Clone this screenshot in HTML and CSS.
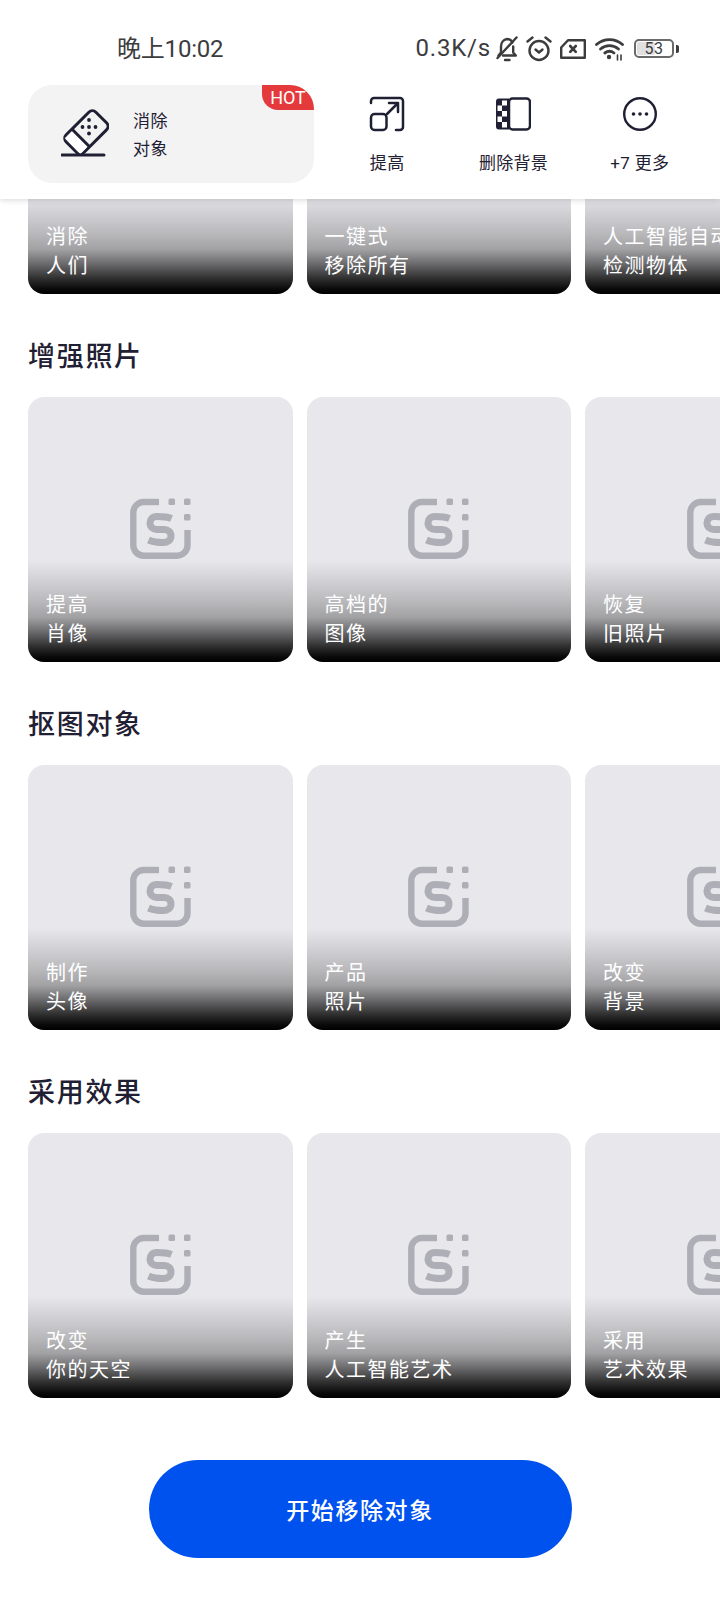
FILE: index.html
```html
<!DOCTYPE html>
<html lang="zh-CN">
<head>
    <meta charset="UTF-8">
    <meta name="viewport" content="width=device-width, initial-scale=1.0">
    <title>消除对象</title>
    <link rel="stylesheet" href="styles.css">
</head>
<body>
    <div class="screen">
        <header class="top">
            <div class="status">
                <span class="status-time">晚上10:02</span>
                <div class="status-right">
                    <span class="status-speed">0.3K/s</span>
                    <svg class="st-bell" width="24" height="26" viewBox="0 0 24 26" fill="none" stroke="#3c3c3e" stroke-width="2.4" stroke-linejoin="round" stroke-linecap="round">
                        <path d="M3.500 19.500 6 16.500V10.500C6 6.500 8.500 3.500 12 3 14.500 3 16.400 4.400 17.400 6.400"/>
                        <path d="M18.200 10.500V16.500L20.800 19.500H8"/>
                        <path d="M2.500 22 21.500 1.500"/>
                        <path d="M10 24H14.500"/>
                    </svg>
                    <svg class="st-alarm" width="26" height="26" viewBox="0 0 26 26" fill="none" stroke="#3c3c3e" stroke-width="2.4" stroke-linecap="round" stroke-linejoin="round">
                        <circle cx="13" cy="14.500" r="9.500"/>
                        <path d="M1.500 5.500 6.500 1.500M24.500 5.500 19.500 1.500"/>
                        <path d="M9.500 13.500 13 16.500 16.500 13.500"/>
                    </svg>
                    <svg class="st-sim" width="26" height="20" viewBox="0 0 26 20" fill="none" stroke="#3c3c3e" stroke-width="2.400" stroke-linejoin="round" stroke-linecap="round">
                        <path d="M1.200 8.500 8 1.200H24.800V18.800H1.200Z"/>
                        <path d="M10.200 7 15.800 12.800M15.800 7 10.200 12.800" stroke-width="2.600"/>
                    </svg>
                    <svg class="st-wifi" width="30" height="24" viewBox="0 0 30 24" fill="none" stroke="#3c3c3e" stroke-width="2.800" stroke-linecap="round">
                        <path d="M1.500 7.500C9 1 20 1 27.500 7.500"/>
                        <path d="M5.500 12C11 7.500 18 7.500 23.500 12"/>
                        <path d="M9.800 16C12.800 13.800 16.200 13.800 19 16"/>
                        <circle cx="14" cy="20" r="2.200" fill="#3c3c3e" stroke="none"/>
                        <path d="M22.500 18V23M26 18V23" stroke-width="1.600"/>
                    </svg>
                    <div class="battery">
                        <div class="battery-body">
                            <span class="battery-fill"></span>
                            <span class="battery-num">53</span>
                        </div>
                        <span class="battery-nub"></span>
                    </div>
                </div>
            </div>
            <div class="tools">
                <div class="tool-main">
                    <svg width="48" height="52" viewBox="0 0 48 52" fill="none" stroke="#1f2033" stroke-width="3">
                        <g transform="rotate(-45 25 24)">
                            <rect x="4" y="12" width="42" height="25" rx="5"/>
                            <path d="M17 12V37"/>
                            <rect x="5.500" y="13.500" width="10" height="22" fill="#fff" stroke="none"/>
                        </g>
                        <path d="M1 47H43" stroke-linecap="round"/>
                        <g fill="#1f2033" stroke="none">
                            <circle cx="28" cy="12" r="1.900"/>
                            <circle cx="21.500" cy="19" r="1.900"/>
                            <circle cx="28" cy="19" r="1.900"/>
                            <circle cx="34.500" cy="19" r="1.900"/>
                            <circle cx="28" cy="25.500" r="1.900"/>
                        </g>
                    </svg>
                    <div class="tool-main-text">消除<br>对象</div>
                    <span class="hot">HOT</span>
                </div>
                <div class="tool">
                    <svg width="36" height="36" viewBox="0 0 36 36" fill="none" stroke="#1f2033" stroke-width="2.500" stroke-linecap="round" stroke-linejoin="round">
                        <path d="M2 7V5A3 3 0 0 1 5 2H31A3 3 0 0 1 34 5V31A3 3 0 0 1 31 34H27"/>
                        <rect x="2" y="18" width="15.500" height="16" rx="3.500"/>
                        <path d="M18 18 28.500 7.500M20 7H29V16"/>
                    </svg>
                    <span class="tool-label">提高</span>
                </div>
                <div class="tool">
                    <svg width="36" height="36" viewBox="0 0 36 36" fill="none">
                        <path d="M4 2.500H14V33.500H4A3 3 0 0 1 1 30.500V5.500A3 3 0 0 1 4 2.500Z" fill="#1f2033"/>
                        <g fill="#fff">
                            <rect x="7" y="4.500" width="5" height="5"/>
                            <rect x="2.500" y="9.500" width="4.500" height="5.500"/>
                            <rect x="7" y="15" width="5" height="5.500"/>
                            <rect x="2.500" y="20.500" width="4.500" height="5.500"/>
                            <rect x="7" y="26" width="5" height="5.500"/>
                        </g>
                        <rect x="14" y="2.500" width="21" height="31" rx="3.500" stroke="#1f2033" stroke-width="2.500"/>
                    </svg>
                    <span class="tool-label">删除背景</span>
                </div>
                <div class="tool">
                    <svg width="36" height="36" viewBox="0 0 36 36" fill="none">
                        <circle cx="18" cy="18" r="15.800" stroke="#1f2033" stroke-width="2.400"/>
                        <g fill="#1f2033">
                            <circle cx="11.500" cy="18" r="1.800"/>
                            <circle cx="18" cy="18" r="1.800"/>
                            <circle cx="24.500" cy="18" r="1.800"/>
                        </g>
                    </svg>
                    <span class="tool-label">+7 更多</span>
                </div>
            </div>
        </header>

        <main class="feed">
            <!-- first row is scrolled up under the header -->
            <div class="row row-scrolled">
                <div class="tile"><div class="tile-text">消除<br>人们</div></div>
                <div class="tile"><div class="tile-text">一键式<br>移除所有</div></div>
                <div class="tile"><div class="tile-text">人工智能自动<br>检测物体</div></div>
            </div>

            <h2 class="section-title">增强照片</h2>
            <div class="row">
                <div class="tile">
                    <svg class="logo" viewBox="0 0 61 61"><use href="#logo-s"/></svg>
                    <div class="tile-text">提高<br>肖像</div>
                </div>
                <div class="tile">
                    <svg class="logo" viewBox="0 0 61 61"><use href="#logo-s"/></svg>
                    <div class="tile-text">高档的<br>图像</div>
                </div>
                <div class="tile">
                    <svg class="logo" viewBox="0 0 61 61"><use href="#logo-s"/></svg>
                    <div class="tile-text">恢复<br>旧照片</div>
                </div>
            </div>

            <h2 class="section-title">抠图对象</h2>
            <div class="row">
                <div class="tile">
                    <svg class="logo" viewBox="0 0 61 61"><use href="#logo-s"/></svg>
                    <div class="tile-text">制作<br>头像</div>
                </div>
                <div class="tile">
                    <svg class="logo" viewBox="0 0 61 61"><use href="#logo-s"/></svg>
                    <div class="tile-text">产品<br>照片</div>
                </div>
                <div class="tile">
                    <svg class="logo" viewBox="0 0 61 61"><use href="#logo-s"/></svg>
                    <div class="tile-text">改变<br>背景</div>
                </div>
            </div>

            <h2 class="section-title">采用效果</h2>
            <div class="row">
                <div class="tile">
                    <svg class="logo" viewBox="0 0 61 61"><use href="#logo-s"/></svg>
                    <div class="tile-text">改变<br>你的天空</div>
                </div>
                <div class="tile">
                    <svg class="logo" viewBox="0 0 61 61"><use href="#logo-s"/></svg>
                    <div class="tile-text">产生<br>人工智能艺术</div>
                </div>
                <div class="tile">
                    <svg class="logo" viewBox="0 0 61 61"><use href="#logo-s"/></svg>
                    <div class="tile-text">采用<br>艺术效果</div>
                </div>
            </div>

            <div class="action">
                <button class="start-btn">开始移除对象</button>
            </div>
        </main>
    </div>

    <svg class="defs" width="0" height="0">
        <symbol id="logo-s" viewBox="0 0 61 61">
            <g fill="none" stroke="#aeaeb6" stroke-width="6.400">
                <path d="M29 4H14A10.500 10.500 0 0 0 3.300 14.500V47A10.500 10.500 0 0 0 14 57.700H47A10.500 10.500 0 0 0 57.500 47V32"/>
                <path d="M41.500 20.500C38 19 33 18.500 27 18.500 22 18.500 20 22 20 25 20 29 23 31.500 27 31.500H34C38.500 31.500 41 34 41 38 41 42 38 44.500 33 44.500 28 44.500 23 44 18.500 42" stroke-width="7"/>
            </g>
            <g fill="#aeaeb6">
                <rect x="38.500" y="0.500" width="6.500" height="6.500" rx="1.500"/>
                <rect x="54" y="0.500" width="6.500" height="6.500" rx="1.500"/>
                <rect x="54" y="16" width="6.500" height="6.500" rx="1.500"/>
            </g>
        </symbol>
    </svg>
</body>
</html>
```

FILE: styles.css
```css
* {
    box-sizing: border-box;
}

body {
    margin: 0;
    background: #fff;
    font-family: Roboto, "Noto Sans CJK SC", sans-serif;
}

.screen {
    width: 720px;
    height: 1600px;
    display: flex;
    flex-direction: column;
    overflow: hidden;
}

.top {
    height: 199px;
    flex-shrink: 0;
    position: relative;
    z-index: 2;
    background: #fff;
    box-shadow: 0 1px 6px rgba(0, 0, 0, 0.16);
}

.status {
    height: 85px;
    padding: 12px 41px 0 117px;
    display: flex;
    justify-content: space-between;
    align-items: center;
    color: #3c3c3e;
    font-size: 24px;
}

.status-time {
    margin-bottom: 4px;
    letter-spacing: -0.2px;
}

.status-right {
    display: flex;
    align-items: center;
}

.status-speed {
    letter-spacing: 0.8px;
    margin-right: 4px;
    margin-bottom: 2px;
}

.st-alarm {
    margin-left: 7px;
}

.st-sim {
    margin-left: 8px;
}

.st-wifi {
    margin-left: 9px;
}

.battery {
    margin-left: 9px;
    display: flex;
    align-items: center;
}

.battery-body {
    width: 40px;
    height: 19px;
    border: 2px solid #6a6a6c;
    border-radius: 5px;
    position: relative;
    display: flex;
    align-items: center;
    justify-content: center;
}

.battery-fill {
    position: absolute;
    left: 1px;
    top: 1px;
    bottom: 1px;
    width: 18px;
    background: #e0e0e2;
    border-radius: 2px;
}

.battery-num {
    position: relative;
    font-size: 16px;
    line-height: 15px;
    letter-spacing: 0.5px;
    color: #3c3c3e;
}

.battery-nub {
    width: 3px;
    height: 8px;
    margin-left: 2px;
    background: #3c3c3e;
    border-radius: 0 2px 2px 0;
}

.tools {
    display: flex;
    padding-left: 28px;
    padding-right: 17px;
}

.tool-main {
    width: 286px;
    height: 98px;
    margin-right: 10px;
    padding-left: 33px;
    background: #f3f3f4;
    border-radius: 24px;
    display: flex;
    align-items: center;
    position: relative;
    overflow: hidden;
}

.tool-main-text {
    margin: 2px 0 0 24px;
    font-size: 17px;
    line-height: 28px;
    letter-spacing: 0.4px;
    color: #1f2033;
}

.hot {
    position: absolute;
    top: 0;
    right: 0;
    width: 52px;
    height: 25px;
    background: #e43a3c;
    color: #fff;
    font-size: 18px;
    line-height: 26px;
    text-align: center;
    border-bottom-left-radius: 16px;
}

.tool {
    flex: 1;
    display: flex;
    flex-direction: column;
    align-items: center;
    padding-top: 11px;
}

.tool-label {
    margin-top: 19px;
    font-size: 17px;
    line-height: 24px;
    letter-spacing: 0.3px;
    color: #1f2033;
    white-space: nowrap;
}

.feed {
    flex: 1;
    overflow: hidden;
}

.row {
    display: flex;
    gap: 14px;
    padding-left: 28px;
}

.row-scrolled {
    margin-top: -170px;
}

.tile {
    width: 264.5px;
    height: 265px;
    flex-shrink: 0;
    background: #e8e8ec;
    border-radius: 16px;
    position: relative;
    overflow: hidden;
    display: flex;
    align-items: center;
    justify-content: center;
}

.logo {
    width: 61px;
    height: 61px;
    margin-top: -2px;
}

.tile-text {
    position: absolute;
    left: 0;
    right: 0;
    bottom: 0;
    height: 102px;
    padding: 31px 0 0 18px;
    background: linear-gradient(to bottom,
        rgba(0, 0, 0, 0) 0%,
        rgba(0, 0, 0, 0.08) 16%,
        rgba(0, 0, 0, 0.2) 40%,
        rgba(0, 0, 0, 0.3) 56%,
        rgba(0, 0, 0, 0.55) 71%,
        rgba(0, 0, 0, 0.8) 85%,
        rgba(0, 0, 0, 0.96) 95%,
        #000 100%);
    color: #fff;
    font-size: 20px;
    line-height: 28.5px;
    letter-spacing: 1.5px;
    white-space: nowrap;
}

.section-title {
    margin: 0;
    height: 103px;
    padding: 44px 0 0 28px;
    font-size: 27px;
    line-height: 38px;
    font-weight: 500;
    letter-spacing: 1.7px;
    color: #1f2033;
}

.action {
    display: flex;
    justify-content: center;
    padding-top: 62px;
}

.start-btn {
    width: 423px;
    height: 98px;
    border: 0;
    border-radius: 49px;
    background: #0052ef;
    color: #fff;
    font-family: inherit;
    font-size: 23px;
    font-weight: 500;
    letter-spacing: 1.6px;
}

.defs {
    position: absolute;
}
```
